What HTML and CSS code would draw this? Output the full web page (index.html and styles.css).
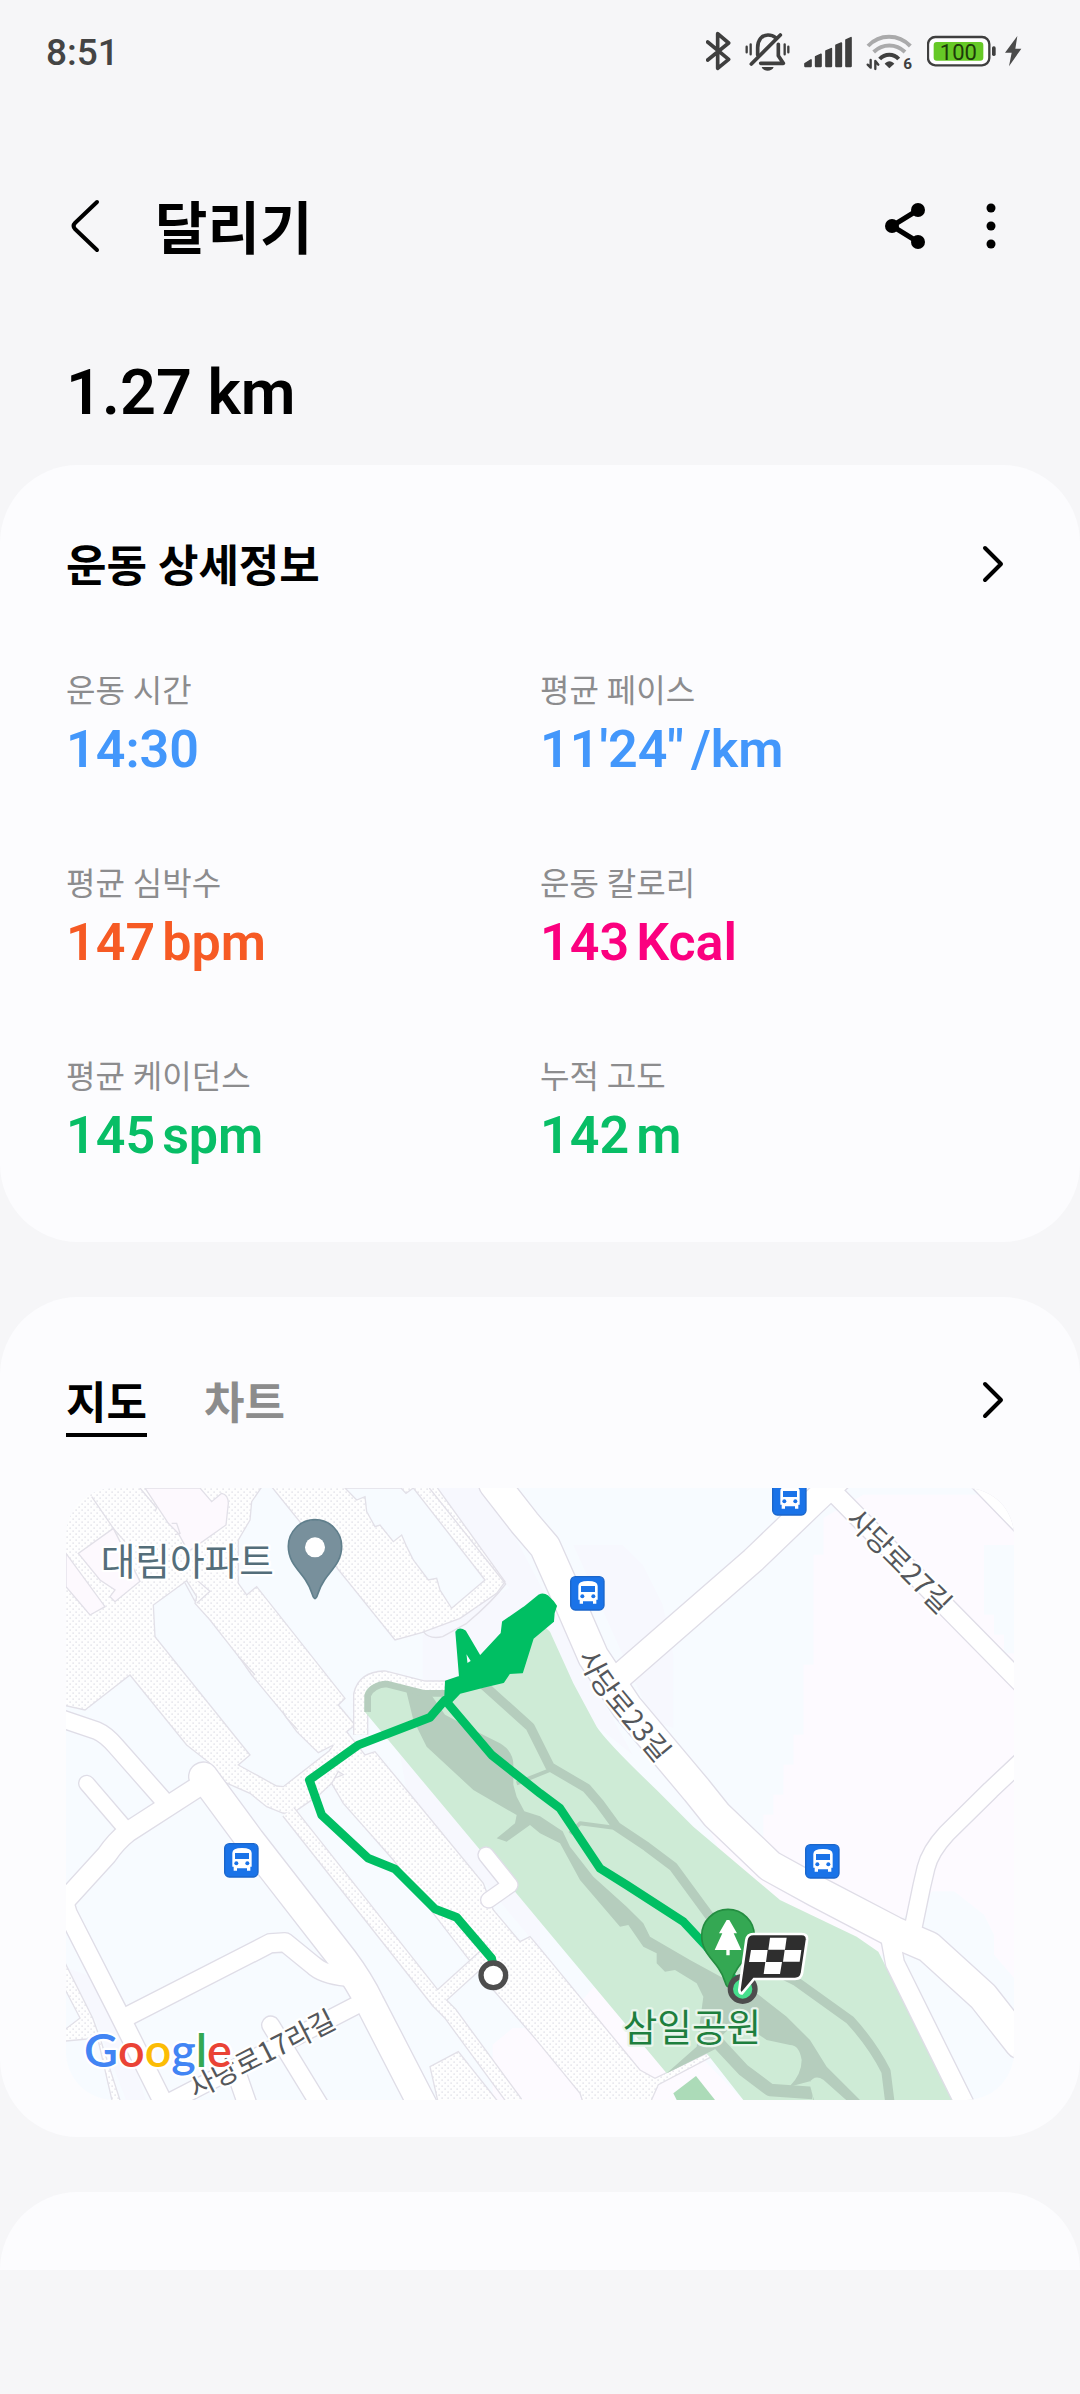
FILE: index.html
```html
<!DOCTYPE html>
<html lang="ko">
<head>
    <meta charset="UTF-8">
    <meta name="viewport" content="width=device-width, initial-scale=1.0">
    <title>달리기</title>
    <link rel="stylesheet" href="styles.css">
</head>
<body>
    <div class="status-bar">
        <span class="clock">8:51</span>
        <div class="status-icons">
            <svg width="25" height="40" viewBox="80 62 75 120" aria-hidden="true">
                <path class="line" d="M85 95 L148 147 L115 174 V70 L148 98 L85 149"/>
            </svg>
            <svg width="45" height="40" viewBox="199 62 135 120" aria-hidden="true">
                <path class="line" d="M237 134 V112 C237 88 250 74 268 74 C277 74 285 77 291 82 M299 102 V136 L314 159 H246"/>
                <path class="line" d="M218 161 L305 74"/>
                <path d="M249 170 H285 C280 185 254 185 249 170 Z" fill="#3f3f3f"/>
                <path class="line-thin" d="M204 109 V126 M216 102 V132 M318 102 V132 M329 109 V126"/>
            </svg>
            <svg width="48" height="40" viewBox="375 62 144 120" aria-hidden="true">
                <path class="bars" d="M378 160 L396 149 V168 H378 Z M410 139 L426 132 V168 H410 Z M441 122 L457 115 V168 H441 Z M471 105 L487 98 V168 H471 Z M501 89 L516 82 V168 H501 Z"/>
            </svg>
            <svg class="wifi" width="47" height="40" viewBox="557 62 141 120" aria-hidden="true">
                <path class="wave wave-off" d="M563 107 C598 70 654 70 690 107 M580 125 C608 99 646 99 674 125"/>
                <path class="wave" d="M598 146 C614 129 640 129 655 146"/>
                <path d="M613 160 C621 150 634 150 642 160 L627 174 Z" fill="#3f3f3f"/>
                <path class="arrows" d="M571 149 V172 L562 163 M585 176 V152 L594 163"/>
                <text class="wifi-gen" x="669" y="177">6</text>
            </svg>
            <div class="battery-group">
                <svg width="69" height="40" viewBox="741 62 207 120" role="img" aria-label="배터리 100">
                    <rect x="744" y="80" width="184" height="85" rx="22" fill="#fff" stroke="#3f3f3f" stroke-width="7"/>
                    <rect x="761" y="95" width="149" height="56" rx="9" fill="#66c926"/>
                    <rect x="936" y="108" width="11" height="29" rx="5" fill="#3f3f3f"/>
                    <text class="battery-level" x="835" y="149">100</text>
                </svg>
                <svg width="18" height="40" viewBox="969 62 54 120" aria-hidden="true">
                    <path d="M1009 77 L972 127 H992 L984 168 L1021 115 H1003 Z" fill="#4b4b4b"/>
                </svg>
            </div>
        </div>
    </div>

    <header class="app-header">
        <button class="icon-button" type="button" aria-label="뒤로">
            <svg width="30" height="56" viewBox="0 0 30 56"><path d="M27 4 L5 25 Q2 28 5 31 L27 52"/></svg>
        </button>
        <h1 class="title">달리기</h1>
        <div class="header-actions">
            <button class="icon-button" type="button" aria-label="공유">
                <svg width="42" height="48" viewBox="0 0 42 48">
                    <path d="M34 8 L8 24 L34 40"/>
                    <circle cx="34" cy="8" r="7"/><circle cx="8" cy="24" r="7"/><circle cx="34" cy="40" r="7"/>
                </svg>
            </button>
            <button class="icon-button" type="button" aria-label="더보기">
                <svg width="10" height="48" viewBox="0 0 10 48">
                    <circle cx="5" cy="6" r="4.5"/><circle cx="5" cy="24" r="4.5"/><circle cx="5" cy="42" r="4.5"/>
                </svg>
            </button>
        </div>
    </header>

    <p class="distance">1.27 km</p>

    <main class="cards">
        <section class="card">
            <div class="card-head">
                <h2 class="card-title">운동 상세정보</h2>
                <a class="more" href="#details" aria-label="운동 상세정보 보기">
                    <svg width="22" height="38" viewBox="0 0 22 38"><path d="M3 3 L19 19 L3 35"/></svg>
                </a>
            </div>
            <dl class="stats">
                <div class="stat">
                    <dt>운동 시간</dt>
                    <dd class="blue">14:30</dd>
                </div>
                <div class="stat">
                    <dt>평균 페이스</dt>
                    <dd class="blue">11'24"<span>/km</span></dd>
                </div>
                <div class="stat">
                    <dt>평균 심박수</dt>
                    <dd class="orange">147<span>bpm</span></dd>
                </div>
                <div class="stat">
                    <dt>운동 칼로리</dt>
                    <dd class="pink">143<span>Kcal</span></dd>
                </div>
                <div class="stat">
                    <dt>평균 케이던스</dt>
                    <dd class="green">145<span>spm</span></dd>
                </div>
                <div class="stat">
                    <dt>누적 고도</dt>
                    <dd class="green">142<span>m</span></dd>
                </div>
            </dl>
        </section>

        <section class="card map-card">
            <div class="card-head">
                <div class="tabs">
                    <button class="tab active" type="button">지도</button>
                    <button class="tab" type="button">차트</button>
                </div>
                <a class="more" href="#map" aria-label="지도 보기">
                    <svg width="22" height="38" viewBox="0 0 22 38"><path d="M3 3 L19 19 L3 35"/></svg>
                </a>
            </div>

            <svg class="map" viewBox="0 0 2844 1836" role="img" aria-label="달리기 경로">
                <defs>
                    <pattern id="dotted" width="18" height="18" patternUnits="userSpaceOnUse">
                        <rect width="18" height="18" fill="#fefefe"/>
                        <rect x="1" y="1" width="5" height="5" fill="#e9e9ee"/>
                        <rect x="10" y="10" width="5" height="5" fill="#e9e9ee"/>
                    </pattern>
                    <g id="roads" class="roads">
                        <path class="w92" d="M1285 -12 L1377 106 L1437 176 L1497 311 L1582 506 L1682 656 L1892 906 L1952 981 L2112 1134 L2252 1211 L2482 1331 L2587 1376 L2752 1526 L2862 1666"/>
                        <path class="w76" d="M1650 575 L2062 216 L2240 45 L2320 -30"/>
                        <path class="w56" d="M2280 -10 L2870 590"/>
                        <path class="w56" d="M2730 -30 L2900 145"/>
                        <path class="w52" d="M2874 812 L2774 906 L2642 1036 Q2592 1090 2580 1140 L2567 1196 L2540 1326"/>
                        <path class="w56" d="M2472 1346 L2487 1426 L2700 1856"/>
                        <path class="w52" d="M-20 690 L92 728 Q120 740 150 775 L292 936"/>
                        <path class="w62" d="M412 886 L187 1031 Q150 1060 122 1101 L-10 1246"/>
                        <path class="w46" d="M62 886 L182 1026"/>
                        <path class="w86" d="M412 866 L552 1056 L832 1416 Q880 1480 912 1546 L1072 1856"/>
                        <path class="w56" d="M842 1466 Q770 1460 740 1430 L657 1363 L612 1366 L192 1581"/>
                        <path class="w56" d="M-6 1240 L5 1276 L150 1560 L300 1860"/>
                        <path class="w52" d="M882 1546 L290 1853"/>
                        <path class="w52" d="M614 1611 L770 1866"/>
                        <path class="w56" d="M512 1756 L550 1866"/>
                        <path class="w46" d="M1260 1101 L1332 1191 L1268 1236"/>
                    </g>
                    <g id="bus">
                        <rect x="2" y="2" width="100" height="100" rx="14" fill="#1a73e8" stroke="#1b66ca" stroke-width="4"/>
                        <path d="M25 30 Q25 15 54 15 Q83 15 83 30 V71 H79 V83 H69 V76 H39 V83 H29 V71 H25 Z" fill="#fff"/>
                        <rect x="33" y="30" width="42" height="18" fill="#1a73e8"/>
                        <circle cx="37" cy="61" r="6" fill="#1a73e8"/><circle cx="70" cy="61" r="6" fill="#1a73e8"/>
                    </g>
                    <path id="street23" d="M1536 504 Q1560 566 1612 634 L1800 860"/>
                </defs>

                <!-- ground -->
                <rect width="2844" height="1836" fill="#f7fbff"/>
                <path fill="#f7f8fe" d="M1102 0 H1270 L1480 400 L1700 800 L1600 720 L1300 600 H1070 V440 L1330 300 Z M1522 171 H1670 L1730 230 L1790 350 L1822 500 V720 L1760 700 Z"/>
                <path fill="#fdfaff" d="M2392 20 H2844 V1470 L2784 1400 V1340 L2754 1280 L2664 1210 H2600 L2500 1300 L2520 1400 H2430 L2100 1220 L1980 1130 L1900 960 L2092 1080 V980 H2122 V920 H2152 V830 H2182 V740 H2212 V530 H2242 V200 H2272 V90 Z"/>
                <path fill="#f7fbff" d="M2754 171 H2844 V496 H2814 V440 H2784 V380 H2754 Z"/>
                <path fill="#fdfaff" d="M1280 1836 V1670 L1340 1620 H1480 L1580 1500 L1700 1500 L2032 1836 Z"/>
                <path fill="#f7f8fe" d="M1000 791 L1092 906 L1422 1301 V1381 L1390 1346 L1022 906 Z M0 1440 L120 1480 L240 1836 H180 L90 1600 Z"/>

                <!-- building lots -->
                <path class="lot" d="M-10 -10 H592 L557 41 L552 96 L517 156 V286 L542 321 L572 296 L837 631 L817 651 L867 711 L842 731 L897 801 L927 791 L1022 906 L1252 1186 L1282 1266 L1362 1361 L1392 1346 L1422 1381 L1722 1746 L1767 1771 L1922 1696 L1937 1706 L1777 1790 L1752 1846 H1552 L1542 1816 L1452 1706 L1407 1651 L1282 1506 L1202 1406 L1102 1276 L982 1116 L832 946 L797 886 L760 920 L687 971 L652 976 L602 956 L552 916 L472 881 L402 846 L432 826 L362 771 L192 561 L57 666 L-10 651 Z"/>
                <path class="lot" d="M620 0 L600 -20 H1100 L1317 281 L1292 316 L1182 391 L1067 434 L987 456 Z"/>
                <path class="line-lot" d="M1090 0 L1319 288 Q1280 340 1202 406 L1130 446 Q1090 455 1072 431"/>
                <path class="block" d="M837 0 L872 36 L897 26 L902 71 L927 116 L942 111 L982 161 L1007 141 L1022 176 L1042 216 L1087 276 L1112 271 L1122 306 L1157 361 L1257 276 L1042 0 L1020 16 L1005 0 Z"/>
                <path class="block" d="M362 278 L392 326 L387 346 L432 396 L522 511 L557 561 L652 676 L692 731 L757 794 L802 771 L790 788 L652 896 L632 894 L517 831 L552 801 L267 446 L262 351 Z"/>
                <path class="block-pink" d="M237 0 H402 L437 41 L467 16 Q487 20 487 46 L480 111 L367 191 L337 136 L307 106 Z"/>
                <path class="block-pink" d="M142 121 L37 196 L102 276 L147 306 L132 326 L147 341 L222 280 Z"/>
                <path class="block-pink" d="M0 196 L117 356 L72 381 L0 296 Z"/>
                <path class="line-lot" d="M77 26 L142 121 L177 161 M222 0 L272 60 L267 70 M317 106 L332 106 L342 136 L327 140 M392 276 L432 310 L392 346 M357 285 L387 340 M517 506 L527 516 L567 561 M650 670 L662 690 L695 725 M797 886 L817 850 L832 860 L807 870"/>
                <path class="lane-edge" d="M667 971 L1117 1541 L1152 1576 L1350 1846 M1117 1531 L1262 1400"/>
                <path class="lane" d="M667 971 L1117 1541 L1152 1576 L1350 1846 M1117 1531 L1262 1400"/>
                <path class="lot" d="M1092 1736 L1177 1691 L1300 1846 H1117 Z"/>
                <path class="lot" d="M-10 1410 L80 1590 L105 1660 L165 1846 H140 L95 1650 L-10 1660 V1630 L42 1590 L-10 1490 Z"/>
                <path class="lane-edge" d="M884 740 V620 Q895 572 955 570 L1072 600 L1150 600"/>
                <path class="lane" d="M884 740 V620 Q895 572 955 570 L1072 600 L1150 600"/>

                <!-- park -->
                <path fill="#ceebd6" d="M897 616 Q905 585 962 581 L1072 608 H1132 L1300 520 L1440 420 L1452 431 L1522 586 L1592 716 Q1620 760 1772 906 L1882 1016 L2142 1236 L2372 1346 L2437 1391 L2662 1836 H2032 L1922 1696 L1802 1756 L1422 1301 L1092 906 L895 670 Z"/>
                <g class="trails">
                    <path class="trail-fill" d="M1020 606 L1092 616 L1137 680 L1242 736 L1302 766 Q1342 790 1342 830 V890 L1352 926 L1375 970 L1422 985 L1490 1030 L1512 1076 L1582 1166 L1682 1256 L1732 1306 L1752 1346 L1872 1416 L1982 1476 L2072 1516 L2162 1586 L2232 1656 L2282 1736 L2382 1836 H2242 L2232 1780 L2170 1796 Q2207 1760 2207 1716 Q2200 1671 2172 1671 L2102 1656 L2050 1620 Q1960 1610 1962 1676 L1802 1756 L1892 1676 L1912 1526 L1892 1486 L1827 1446 L1797 1451 L1772 1426 V1396 L1732 1376 L1687 1311 L1662 1316 L1542 1176 L1482 1066 L1422 1036 L1392 1011 L1322 1061 L1292 1051 L1347 1006 L1352 981 L1222 906 L1082 776 L1042 696 Z"/>
                    <path class="t22" d="M905 672 V622 Q920 590 962 588 L1072 616 H1150"/>
                    <path class="t26" d="M1252 590 L1392 716 L1452 836 L1562 901 L1600 945 L1652 1016 L1742 1076 L1822 1136 L1932 1286 L2030 1400 L2192 1481 L2352 1596 Q2420 1670 2460 1750 L2472 1846"/>
                    <path class="t12" d="M1352 886 L1452 846 M1512 1036 L1542 1006 L1650 1020"/>
                    <path class="t38" d="M1952 1660 L2032 1746 L2112 1806 L2240 1815"/>
                </g>
                <path fill="#ceebd6" d="M2230 1785 Q2245 1758 2272 1775 L2345 1840 H2245 Z"/>
                <path fill="#acdbb8" d="M1822 1816 L1890 1764 L1947 1836 H1832 Z"/>

                <!-- roads: outline first, then fill -->
                <use class="casing" href="#roads"/>
                <use class="surface" href="#roads"/>

                <!-- street and place names -->
                <text class="street" transform="translate(2336 98) rotate(45)">사당로27길</text>
                <text class="street"><textPath href="#street23">사당로23길</textPath></text>
                <text class="street" transform="translate(388 1834) rotate(-27)">사당로17라길</text>
                <text class="place" x="104" y="262">대림아파트</text>
                <text class="place park" x="1670" y="1658">삼일공원</text>

                <use href="#bus" x="1512" y="264"/>
                <use href="#bus" x="2118" y="-21"/>
                <use href="#bus" x="474" y="1065"/>
                <use href="#bus" x="2217" y="1068"/>

                <path d="M747 332 C738 332 741 308 718 275 C697 244 667 222 667 175 A80 80 0 0 1 827 175 C827 222 797 244 776 275 C753 308 756 332 747 332 Z" fill="#78909c" stroke="#607f8c" stroke-width="5"/>
                <circle cx="747" cy="178" r="30" fill="#fff"/>

                <!-- recorded track -->
                <path class="track" d="M1282 1440 L1277 1411 L1172 1288 L1107 1263 L987 1143 L907 1111 L767 981 L730 876 L877 771 L1092 688 L1137 636 L1277 801 L1422 916 L1482 961 L1602 1141 L1682 1191 L1852 1301 L1922 1376 L2022 1496"/>
                <path class="track-area" d="M1137 645 L1140 580 L1182 566 L1171 432 Q1180 418 1197 430 L1242 506 L1307 436 L1311 402 L1374 359 L1420 322 Q1432 316 1445 325 L1460 340 L1470 354 L1463 375 L1461 400 L1400 451 L1368 553 L1330 555 L1312 582 L1252 596 L1182 614 L1155 642 Z M1197 486 L1202 530 L1218 520 Z" fill-rule="evenodd"/>
                <circle class="endpoint" cx="1282" cy="1462" r="37" fill="#fff"/>

                <path d="M1986 1496 C1977 1496 1980 1472 1957 1440 C1936 1410 1907 1388 1907 1343 A79 79 0 0 1 2065 1343 C2065 1388 2036 1410 2015 1440 C1992 1472 1995 1496 1986 1496 Z" fill="#34a853" stroke="#248d41" stroke-width="5"/>
                <path d="M1982 1296 H1990 L2013 1336 H2003 L2026 1386 H1991 V1402 H1981 V1386 H1946 L1969 1336 H1959 Z" fill="#fff"/>
                <circle class="endpoint" cx="2030" cy="1503" r="37" fill="#46df8d"/>
                <path d="M2062 1338 H2207 Q2225 1338 2223 1356 L2208 1456 Q2205 1473 2187 1473 H2064 L2028 1516 Q2020 1516 2020 1505 L2041 1356 Q2044 1338 2062 1338 Z" fill="#2e2e2e" stroke="#fff" stroke-width="8"/>
                <path d="M2112 1349 H2162 L2157 1385 H2107 Z M2055 1386 H2105 L2100 1422 H2049 Z M2156 1386 H2206 L2201 1421 H2151 Z M2098 1422 H2148 L2142 1458 H2093 Z" fill="#fff"/>

                <text class="google" x="54" y="1736"><tspan fill="#4285f4">G</tspan><tspan fill="#ea4335">o</tspan><tspan fill="#fbbc05">o</tspan><tspan fill="#4285f4">g</tspan><tspan fill="#34a853">l</tspan><tspan fill="#ea4335">e</tspan></text>
            </svg>
        </section>

        <section class="card next-card"></section>
    </main>
</body>
</html>
```

FILE: styles.css
```css
* {
    margin: 0;
    padding: 0;
    box-sizing: border-box;
}

body {
    font-family: Roboto, "Noto Sans CJK KR", sans-serif;
    background: #f6f6f8;
    min-height: 100vh;
    color: #000;
}

button {
    font: inherit;
    color: inherit;
    background: none;
    border: none;
    cursor: pointer;
}

svg {
    display: block;
}

/* Status bar */
.status-bar {
    display: flex;
    justify-content: space-between;
    align-items: center;
    height: 102px;
    padding: 0 58px 0 46px;
}

.clock {
    padding-top: 2px;
    font-size: 37px;
    font-weight: 500;
    color: #444;
}

.status-icons {
    display: flex;
    align-items: center;
    gap: 14px;
}

.battery-group {
    display: flex;
    gap: 8px;
}

.line,
.line-thin,
.arrows,
.wave {
    fill: none;
    stroke: #3f3f3f;
    stroke-width: 11;
    stroke-linecap: round;
    stroke-linejoin: round;
}

.line-thin,
.arrows {
    stroke-width: 7;
}

.wave {
    stroke-width: 12;
    stroke-linecap: butt;
}

.wave-off {
    stroke: #aaaaab;
}

.bars {
    fill: #3f3f3f;
    stroke: #3f3f3f;
    stroke-width: 5;
    stroke-linejoin: round;
}

.wifi {
    overflow: visible;
}

.wifi-gen {
    font-size: 46px;
    font-weight: 700;
    fill: #3f3f3f;
}

.battery-level {
    font-size: 66px;
    text-anchor: middle;
    fill: #1d3a0a;
}

/* Header */
.app-header {
    display: flex;
    align-items: center;
    height: 248px;
    padding: 0 84px 0 70px;
}

.icon-button path {
    fill: none;
    stroke: #000;
    stroke-width: 4;
    stroke-linecap: round;
}

.title {
    padding-top: 7px;
    margin-left: 55px;
    font-size: 57px;
    font-weight: 600;
    line-height: 80px;
}

.header-actions {
    display: flex;
    align-items: center;
    gap: 60px;
    margin-left: auto;
}

.header-actions path {
    stroke-width: 5;
}

.distance {
    padding: 0 66px;
    margin-bottom: 29px;
    font-size: 63px;
    font-weight: 600;
    line-height: 86px;
}

/* Cards */
.cards {
    display: flex;
    flex-direction: column;
    gap: 55px;
    padding-bottom: 124px;
}

.card {
    padding: 66px 66px 72px;
    background: #fcfcfe;
    border-radius: 78px;
}

.card-head {
    display: flex;
    justify-content: space-between;
    align-items: center;
    min-height: 66px;
}

.card-title {
    padding-top: 6px;
    font-size: 44px;
    font-weight: 600;
    line-height: 60px;
}

.more {
    margin-right: 10px;
}

.more path {
    fill: none;
    stroke: #000;
    stroke-width: 4;
    stroke-linecap: round;
    stroke-linejoin: round;
}

.stats {
    display: grid;
    grid-template-columns: 1fr 1fr;
    row-gap: 75px;
    margin-top: 69px;
}

.stat dt {
    font-size: 32px;
    line-height: 50px;
    color: #8c8c8e;
}

.stat dd {
    display: flex;
    gap: 7px;
    font-size: 52px;
    font-weight: 600;
    line-height: 68px;
}

.blue {
    color: #4397fb;
}

.orange {
    color: #f65a24;
}

.pink {
    color: #fb007f;
}

.green {
    color: #08be66;
}

.tabs {
    display: flex;
    gap: 57px;
}

.tab {
    padding-top: 12px;
    font-size: 44px;
    font-weight: 600;
    line-height: 58px;
    color: #8c8c8c;
    border-bottom: 4px solid transparent;
}

.tab.active {
    color: #000;
    border-bottom-color: #000;
}

.map-card {
    padding-bottom: 37px;
}

.next-card {
    height: 78px;
    padding: 0;
    border-radius: 78px 78px 0 0;
}

/* Map */
.map {
    width: 100%;
    height: auto;
    margin-top: 51px;
    border-radius: 48px;
}

.roads path {
    fill: none;
    stroke-width: calc(var(--road) + var(--edge));
    stroke-linecap: round;
    stroke-linejoin: round;
}

.casing {
    --edge: 8px;
    stroke: #dfdde7;
}

.surface {
    --edge: 0px;
    stroke: #fff;
}

.w92 { --road: 90px; }
.w86 { --road: 84px; }
.w76 { --road: 74px; }
.w62 { --road: 58px; }
.w56 { --road: 54px; }
.w52 { --road: 50px; }
.w46 { --road: 44px; }

.lot,
.block,
.block-pink,
.line-lot {
    stroke: #e2e0e8;
    stroke-width: 4;
}

.lot {
    fill: url(#dotted);
}

.block {
    fill: #f7fbff;
}

.block-pink {
    fill: #fdf9fe;
}

.line-lot {
    fill: none;
}

.lane-edge,
.lane {
    fill: none;
    stroke: #e2e0e8;
    stroke-width: 46;
    stroke-linejoin: round;
}

.lane {
    stroke: url(#dotted);
    stroke-width: 38;
}

.trails path {
    fill: none;
    stroke: #b5cdbd;
    stroke-linejoin: round;
}

.trails .trail-fill {
    fill: #b5cdbd;
    stroke: none;
}

.trails .t38 { stroke-width: 38; }
.trails .t26 { stroke-width: 28; }
.trails .t22 { stroke-width: 20; }
.trails .t12 { stroke-width: 12; }

.street,
.place {
    font-family: "Noto Sans CJK KR", sans-serif;
    font-size: 84px;
    fill: #54575b;
    stroke: #fff;
    stroke-width: 14;
    stroke-linejoin: round;
    paint-order: stroke;
}

.place {
    font-size: 113px;
    fill: #546e7a;
}

.place.park {
    fill: #1e7f3e;
    stroke: #e8f5ec;
}

.track,
.track-area {
    fill: none;
    stroke: #00bf63;
    stroke-width: 26;
    stroke-linejoin: round;
}

.track-area {
    fill: #00bf63;
    stroke-width: 6;
}

.endpoint {
    stroke: #4d4d4d;
    stroke-width: 16;
}

.google {
    font-family: Lato, sans-serif;
    font-size: 140px;
    font-weight: 600;
    stroke: #fff;
    stroke-width: 14;
    stroke-linejoin: round;
    paint-order: stroke;
}
```
